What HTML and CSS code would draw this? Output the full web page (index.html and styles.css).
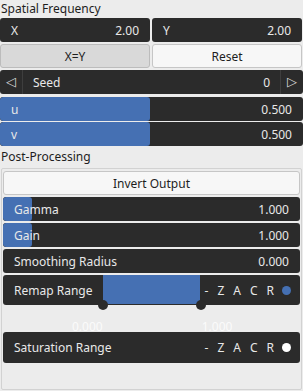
FILE: index.html
```html
<!DOCTYPE html>
<html lang="en">
<head>
    <meta charset="UTF-8">
    <title>Noise Settings</title>
    <link rel="stylesheet" href="styles.css">
</head>
<body>
<div class="panel">
    <div class="heading">Spatial Frequency</div>
    <div class="pair">
        <div class="field"><span>X</span><span>2.00</span></div>
        <div class="field"><span>Y</span><span>2.00</span></div>
    </div>
    <div class="pair">
        <button class="btn btn-down">X=Y</button>
        <button class="btn">Reset</button>
    </div>
    <div class="field seed">
        <span class="arrow arrow-left">&#9665;</span>
        <span class="seed-label">Seed</span>
        <span class="seed-value">0</span>
        <span class="arrow arrow-right">&#9655;</span>
    </div>
    <div class="stack">
        <div class="field slider">
            <div class="fill" style="width: 150px"></div>
            <span>u</span><span>0.500</span>
        </div>
        <div class="field slider">
            <div class="fill" style="width: 150px"></div>
            <span>v</span><span>0.500</span>
        </div>
    </div>

    <div class="heading heading-post">Post-Processing</div>
    <div class="group">
        <button class="btn btn-wide">Invert Output</button>
        <div class="field slider">
            <div class="fill" style="width: 29px"></div>
            <span>Gamma</span><span>1.000</span>
        </div>
        <div class="field slider">
            <div class="fill" style="width: 29px"></div>
            <span>Gain</span><span>1.000</span>
        </div>
        <div class="field">
            <span>Smoothing Radius</span><span>0.000</span>
        </div>

        <!-- range widget: label, selected span, flag letters, toggle dot -->
        <div class="field range range-remap">
            <div class="range-fill"></div>
            <div class="handle handle-min"></div>
            <div class="handle handle-max"></div>
            <span class="range-label">Remap Range</span>
            <span class="flags"><span>-</span><span>Z</span><span>A</span><span>C</span><span>R</span></span>
            <span class="dot dot-blue"></span>
        </div>
        <div class="range-values">
            <span class="range-min">0.000</span>
            <span class="range-max">1.000</span>
        </div>
        <div class="field range range-sat">
            <span class="range-label">Saturation Range</span>
            <span class="flags"><span>-</span><span>Z</span><span>A</span><span>C</span><span>R</span></span>
            <span class="dot dot-white"></span>
        </div>
    </div>
</div>
</body>
</html>
```

FILE: styles.css
```css
body {
    margin: 0;
    background-color: #ececec;
    font-family: "Noto Sans", "Open Sans", sans-serif;
    font-size: 12px;
    color: #1e1e1e;
}

.panel {
    display: flex;
    flex-direction: column;
    width: 303px;
    height: 391px;
}

.heading {
    height: 18px;
    line-height: 17px;
    padding-left: 1px;
}

.heading-post {
    height: 22px;
    line-height: 22px;
}

.pair {
    display: grid;
    grid-template-columns: 150px 150px;
    gap: 2px;
    margin-bottom: 2px;
}

.field {
    position: relative;
    display: flex;
    align-items: center;
    justify-content: space-between;
    height: 24px;
    padding: 0 11px;
    background-color: #2b2b2b;
    border-radius: 3px;
    color: #e8e8e8;
    overflow: hidden;
}

.field span {
    position: relative;
}

/* Buttons */
.btn {
    height: 24px;
    font-family: inherit;
    font-size: 12px;
    color: #1e1e1e;
    background-color: #f7f7f7;
    border: 1px solid #c6c6c6;
    border-radius: 3px;
    padding: 0;
}

.btn-down {
    background-color: #d9d9d9;
    border-color: #bcbcbc;
}

.btn-wide {
    width: 100%;
}

/* Seed stepper */
.seed {
    width: 303px;
    box-sizing: border-box;
    padding: 0;
    justify-content: flex-start;
    margin-bottom: 3px;
}

.arrow {
    width: 22px;
    height: 24px;
    line-height: 24px;
    text-align: center;
    font-family: "DejaVu Sans", sans-serif;
    font-size: 13px;
    color: #d8d8d8;
}

.arrow-left {
    border-right: 1px solid #3e3e3e;
}

.arrow-right {
    border-left: 1px solid #3e3e3e;
}

.seed-label {
    padding-left: 10px;
    flex: 1;
}

.seed-value {
    padding-right: 10px;
}

/* Sliders */
.stack {
    display: flex;
    flex-direction: column;
    gap: 1px;
}

.slider .fill {
    position: absolute;
    left: 0;
    top: 0;
    bottom: 0;
    background-color: #4570b3;
    border-radius: 3px;
}

/* Post processing group */
.group {
    flex: 1;
    display: flex;
    flex-direction: column;
    gap: 2px;
    margin: 0 1px 1px 1px;
    padding: 2px 1px 0 1px;
    border: 1px solid #d2d2d2;
    border-radius: 2px;
}

.range {
    height: 30px;
    padding-right: 9px;
    justify-content: flex-start;
    overflow: visible;
}

.range-sat {
    height: 31px;
}

.range-label {
    flex: 1;
}

.range-fill {
    position: absolute;
    left: 100px;
    top: 0;
    width: 97px;
    bottom: 1px;
    background-color: #4570b3;
}

.handle {
    position: absolute;
    bottom: -5px;
    width: 10px;
    height: 10px;
    border-radius: 50%;
    background-color: #2b2b2b;
    z-index: 2;
}

.handle-min {
    left: 95px;
}

.handle-max {
    left: 193px;
}

.flags {
    display: flex;
    gap: 9px;
    margin-right: 8px;
    color: #e8e8e8;
}

.dot {
    width: 9px;
    height: 9px;
    border-radius: 50%;
}

.dot-blue {
    background-color: #4570b3;
}

.dot-white {
    background-color: #ffffff;
}

.range-values {
    display: flex;
    height: 23px;
    padding-top: 11px;
    box-sizing: border-box;
    line-height: 17px;
    color: #fbfbfb;
}

.range-min {
    margin-left: 69px;
}

.range-max {
    margin-left: 99px;
}
```
